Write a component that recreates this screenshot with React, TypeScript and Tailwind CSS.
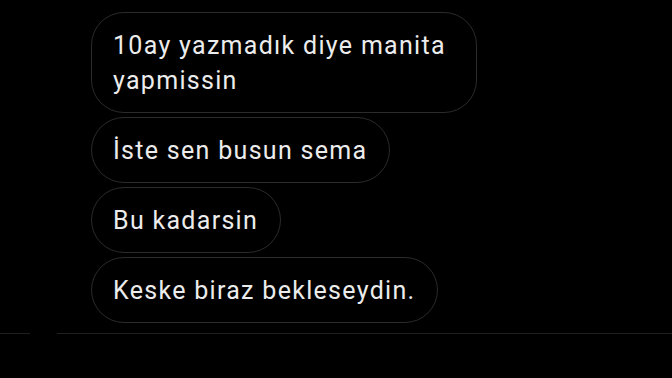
import React from "react";

const msgs = ["10ay yazmadık diye manita yapmissin", "İste sen busun sema", "Bu kadarsin", "Keske biraz bekleseydin."];

export default function App() {
  return (
    <div className="w-[672px] h-[378px] bg-black overflow-hidden" style={{ fontFamily: "Roboto, 'Noto Sans', sans-serif" }}>
      <div className="flex flex-col items-start gap-[4px] pl-[91px] pt-[12px]">
        {msgs.map((m) => (
          <div key={m} className="max-w-[386px] rounded-[33px] border border-[#2b2b2b] pl-[21px] pr-[22px] py-[14.5px] text-[25px] leading-[35px] tracking-[1.3px] text-[#ececec]">
            {m}
          </div>
        ))}
      </div>
      <div className="mt-[10px] flex h-px">
        <div className="w-[30px] bg-[#202020]" />
        <div className="w-[27px]" />
        <div className="flex-1 bg-[#202020]" />
      </div>
    </div>
  );
}
